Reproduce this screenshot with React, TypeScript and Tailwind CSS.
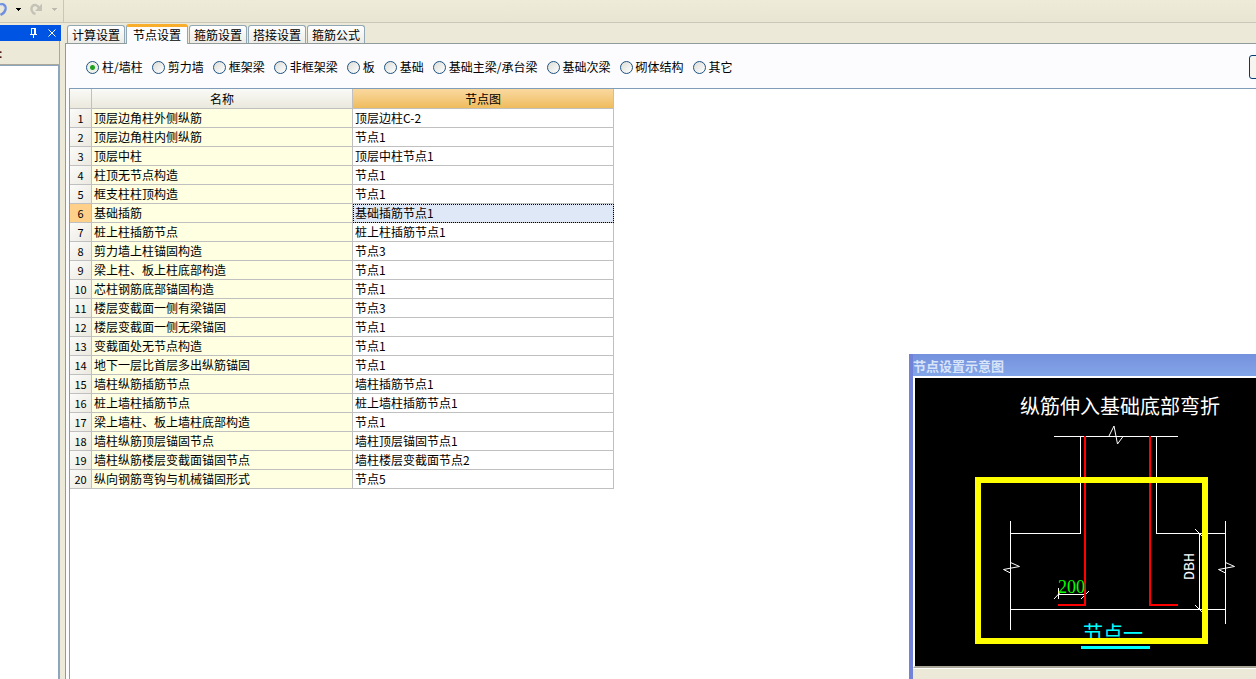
import { useState } from "react";
import clsx from "clsx";

const TABS = ["计算设置", "节点设置", "箍筋设置", "搭接设置", "箍筋公式"];

const MEMBERS = [
  "柱/墙柱",
  "剪力墙",
  "框架梁",
  "非框架梁",
  "板",
  "基础",
  "基础主梁/承台梁",
  "基础次梁",
  "砌体结构",
  "其它",
];

const ROWS: [string, string][] = [
  ["顶层边角柱外侧纵筋", "顶层边柱C-2"],
  ["顶层边角柱内侧纵筋", "节点1"],
  ["顶层中柱", "顶层中柱节点1"],
  ["柱顶无节点构造", "节点1"],
  ["框支柱柱顶构造", "节点1"],
  ["基础插筋", "基础插筋节点1"],
  ["桩上柱插筋节点", "桩上柱插筋节点1"],
  ["剪力墙上柱锚固构造", "节点3"],
  ["梁上柱、板上柱底部构造", "节点1"],
  ["芯柱钢筋底部锚固构造", "节点1"],
  ["楼层变截面一侧有梁锚固", "节点3"],
  ["楼层变截面一侧无梁锚固", "节点1"],
  ["变截面处无节点构造", "节点1"],
  ["地下一层比首层多出纵筋锚固", "节点1"],
  ["墙柱纵筋插筋节点", "墙柱插筋节点1"],
  ["桩上墙柱插筋节点", "桩上墙柱插筋节点1"],
  ["梁上墙柱、板上墙柱底部构造", "节点1"],
  ["墙柱纵筋顶层锚固节点", "墙柱顶层锚固节点1"],
  ["墙柱纵筋楼层变截面锚固节点", "墙柱楼层变截面节点2"],
  ["纵向钢筋弯钩与机械锚固形式", "节点5"],
];

function Toolbar() {
  return (
    <header className="flex h-[23px] shrink-0 border-b border-[#c9c7ba] bg-linear-to-b from-[#efebd9] to-[#e8e6d2]">
      <div className="flex w-16 items-start border-r border-[#c9c7ba]">
        <button type="button" aria-label="撤销" className="h-5 w-3">
          <svg width="10" height="20" viewBox="0 0 10 20" fill="none">
            <path d="M0 4.500C3.500 3.500 6 5 5.500 9C5.200 11.500 3.500 13.500 0.500 15" stroke="#6f8fe0" strokeWidth="2.500" />
            <path d="M0 5.500C2.500 4.800 4.500 6 4.200 9" stroke="#c3d2f6" strokeWidth="1" />
          </svg>
        </button>
        <button type="button" aria-label="撤销列表" className="h-5 w-[18px] pl-1">
          <svg width="6" height="20" viewBox="0 0 6 20" shapeRendering="crispEdges">
            <path d="M0 8h5v1h-1v1h-1v1h-1v-1h-1v-1h-1z" fill="#000" />
          </svg>
        </button>
        <button type="button" aria-label="重做" disabled className="h-5 w-5">
          <svg width="14" height="20" viewBox="0 0 14 20" fill="none">
            <path d="M5.500 14C1.500 13 0.500 8.500 2.500 6C4.500 4 7.500 5 9 8" stroke="#c5c3b8" strokeWidth="2.500" />
            <path d="M12 3.500V11H5z" fill="#c5c3b8" />
          </svg>
        </button>
        <button type="button" aria-label="重做列表" disabled className="h-5 w-3 pl-[2px]">
          <svg width="6" height="20" viewBox="0 0 6 20" shapeRendering="crispEdges">
            <path d="M0 8h5v1h-1v1h-1v1h-1v-1h-1v-1h-1z" fill="#bdbbb0" />
          </svg>
        </button>
      </div>
    </header>
  );
}

function Sidebar() {
  return (
    <aside className="mr-1 flex w-[61px] shrink-0 flex-col pt-[2px]">
      <div className="flex h-4 shrink-0 items-center justify-end gap-[11px] bg-[#0054e3] pr-[5px] text-white">
        <button type="button" aria-label="固定">
          <svg width="7" height="10" viewBox="0 0 7 10" fill="none" stroke="currentColor" shapeRendering="crispEdges">
            <path d="M1.500 6V0.500H5.500V6M4.500 0V6M0 6.500H7M3.500 7V10" />
          </svg>
        </button>
        <button type="button" aria-label="关闭">
          <svg width="8" height="8" viewBox="0 0 8 8" stroke="currentColor" strokeWidth="1">
            <path d="M0.500 0.500L7.500 7.500M7.500 0.500L0.500 7.500" />
          </svg>
        </button>
      </div>
      <div className="mr-px h-6 shrink-0 overflow-hidden border-r border-b border-[#aca899] bg-[#ece9d8] -indent-px text-xs leading-6">
        :
      </div>
      <div className="mr-px flex-1 border-t border-r-2 border-[#8ca6bf] bg-white" />
    </aside>
  );
}

function TabStrip({ active, onSelect }: { active: string; onSelect: (tab: string) => void }) {
  return (
    <div role="tablist" className="flex h-5 items-end gap-px pl-[2px]">
      {TABS.map((tab) => (
        <button
          key={tab}
          type="button"
          role="tab"
          aria-selected={tab === active}
          onClick={() => onSelect(tab)}
          className={clsx(
            "rounded-t-[3px] border-x px-1",
            tab === active
              ? "z-10 -mb-px h-5 border-t-3 border-x-[#91a7b4] border-t-[#f9ae2b] bg-[#fcfcfe] px-[6px] pb-[2px] leading-3"
              : "h-[18px] border-t border-[#91a7b4] bg-linear-to-b from-white to-[#ecebe6] leading-[18px]",
          )}
        >
          {tab}
        </button>
      ))}
    </div>
  );
}

function MemberPicker({ value, onChange }: { value: string; onChange: (member: string) => void }) {
  return (
    <div role="radiogroup" className="flex h-[44px] shrink-0 items-center gap-[9px] pt-[2px] pl-5">
      {MEMBERS.map((member) => (
        <label key={member} className="flex shrink-0 items-center gap-[3px]">
          <input
            type="radio"
            name="member"
            checked={value === member}
            onChange={() => onChange(member)}
            className="size-[13px] appearance-none rounded-full border border-[#1d5281] bg-linear-to-br from-[#dcdcd7] to-white checked:bg-[radial-gradient(circle,#21a121_0_2px,#eef0ea_3px)]"
          />
          {member}
        </label>
      ))}
      <button
        type="button"
        aria-label="更多"
        className="-mr-1 ml-auto h-6 w-[11px] shrink-0 rounded-[3px] border border-[#003c74] bg-[#f5f4ee]"
      />
    </div>
  );
}

function NodeTable() {
  const [selected, setSelected] = useState(5);

  return (
    <table className="w-[544px] table-fixed border-separate border-spacing-0 text-left">
      <colgroup>
        <col className="w-[22px]" />
        <col className="w-[261px]" />
        <col className="w-[261px]" />
      </colgroup>
      <thead>
        <tr className="h-5 text-center leading-4">
          <th className="border-r border-b border-[#c0c0c0] bg-linear-to-b from-[#fafaf7] to-[#ebe9dd] p-0" />
          <th className="border-r border-b border-[#c0c0c0] bg-linear-to-b from-[#fafaf7] to-[#ebe9dd] p-0 font-normal">
            名称
          </th>
          <th className="border-r border-b border-[#c0c0c0] bg-linear-to-b from-[#f9d99f] to-[#f0bc5c] p-0 font-normal">
            节点图
          </th>
        </tr>
      </thead>
      <tbody>
        {ROWS.map(([name, node], i) => (
          <tr key={name} onClick={() => setSelected(i)} className="h-[19px] leading-4">
            <td
              className={clsx(
                "border-r border-b border-[#c0c0c0] p-0 text-center text-[11px]",
                i === selected ? "bg-[#ffd08a]" : "bg-linear-to-br from-[#fbfbf9] to-[#ebe9e0]",
              )}
            >
              {i + 1}
            </td>
            <td className="border-r border-b border-[#c0c0c0] bg-[#ffffe1] p-0 pl-[2px]">{name}</td>
            <td
              className={clsx(
                "border-r border-b border-[#c0c0c0] p-0 pl-[2px]",
                i === selected && "bg-[#dfe8f6] outline-1 -outline-offset-1 outline-dotted outline-black",
              )}
            >
              {node}
            </td>
          </tr>
        ))}
      </tbody>
    </table>
  );
}

function NodeDrawing() {
  return (
    <svg
      width="341"
      height="288"
      viewBox="915 378 341 288"
      fill="none"
      className="block bg-black font-['Noto_Sans_CJK_SC',sans-serif]"
    >
      <text x="1020" y="414" fontSize="20" fill="#fff">
        纵筋伸入基础底部弯折
      </text>

      {/* 柱与基础轮廓 */}
      <g stroke="#fff" shapeRendering="crispEdges">
        <path d="M1054 436.500H1178M1080.500 436V533.500H1010M1156.500 436V533.500H1225M1010 609.500H1225" />
        <path d="M1010.500 521V630M1225.500 521V624M1199.500 533V609M1058 594.500H1085M1058.500 588V599" />
      </g>
      <g stroke="#fff">
        <path d="M1109 436L1114 426L1117.500 444L1123 436.500" />
        <path d="M1010.500 562.500L1019.500 566.500L1003.500 569.500L1010.500 573" />
        <path d="M1225.500 562.500L1234.500 566.500L1218.500 569.500L1225.500 573" />
        <path d="M1195 529L1202 536M1195 605L1202 612M1054 599L1061 591.500M1081 599L1089 591" />
      </g>

      {/* 插筋 */}
      <path
        d="M1085 436V605H1058M1150 436V605H1178"
        stroke="#f00"
        strokeWidth="2"
        shapeRendering="crispEdges"
      />

      <text x="1058" y="593" fontSize="18" fill="#0f0" className="font-['Liberation_Serif',serif]">
        200
      </text>
      <text
        transform="translate(1194 580) rotate(-90)"
        fontSize="15"
        fill="#fff"
        className="font-['Liberation_Mono',monospace]"
      >
        DBH
      </text>
      <text x="1083" y="641" fontSize="20" fill="#0ff">
        节点一
      </text>
      <path d="M1081 647.500H1150" stroke="#0ff" strokeWidth="3" />
      <rect x="978" y="480" width="227" height="161" stroke="#ff0" strokeWidth="6" />
    </svg>
  );
}

function DrawingWindow() {
  return (
    <section className="absolute right-0 bottom-0 flex h-[325px] w-[347px] flex-col border-l-4 border-[#7183d8] bg-[#ece9d8]">
      <h2 className="h-[22px] shrink-0 bg-linear-to-b from-[#7391dd] via-[#7d9be3] to-[#82a5e8] text-[13px] leading-6 font-bold text-[#d8e4f8]">
        节点设置示意图
      </h2>
      <div className="shrink-0 border-t-2 border-b-2 border-l-2 border-white border-b-[#aca899]">
        <NodeDrawing />
      </div>
      <div className="border-t border-white" />
    </section>
  );
}

export default function App() {
  const [tab, setTab] = useState("节点设置");
  const [member, setMember] = useState("柱/墙柱");

  return (
    <div className="relative flex h-screen flex-col overflow-hidden bg-[#ece9d8] font-['Noto_Sans_CJK_SC',sans-serif] text-xs text-black">
      <Toolbar />
      <div className="flex min-h-0 flex-1">
        <Sidebar />
        <main className="flex min-w-0 flex-1 flex-col">
          <TabStrip active={tab} onSelect={setTab} />
          <div className="flex min-h-0 flex-1 flex-col border-t border-l border-[#919b9c] bg-[#fcfcfe]">
            <MemberPicker value={member} onChange={setMember} />
            <div className="ml-[3px] min-h-0 flex-1 border-t border-l border-[#7f9db9] bg-white">
              <NodeTable />
            </div>
          </div>
        </main>
      </div>
      <DrawingWindow />
    </div>
  );
}
